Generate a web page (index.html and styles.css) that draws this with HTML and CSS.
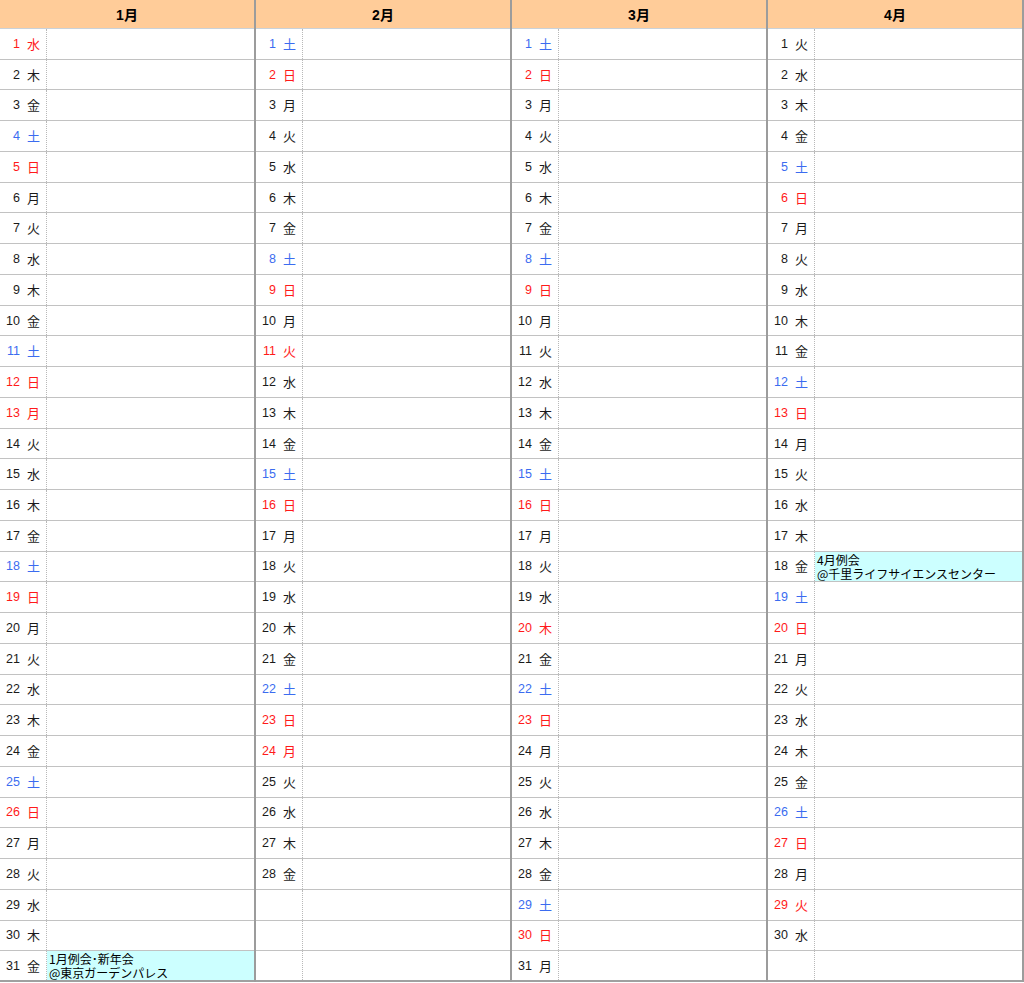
FILE: index.html
```html
<!DOCTYPE html>
<html lang="ja">
<head>
<meta charset="utf-8">
<title>カレンダー</title>
<link rel="stylesheet" href="styles.css">
</head>
<body>
<div class="cal">
<section class="mon">
<div class="hd">1月</div>
<div class="row"><div class="d r"><span class="n">1</span><span class="w">水</span></div><div class="m"></div></div>
<div class="row"><div class="d"><span class="n">2</span><span class="w">木</span></div><div class="m"></div></div>
<div class="row"><div class="d"><span class="n">3</span><span class="w">金</span></div><div class="m"></div></div>
<div class="row"><div class="d b"><span class="n">4</span><span class="w">土</span></div><div class="m"></div></div>
<div class="row"><div class="d r"><span class="n">5</span><span class="w">日</span></div><div class="m"></div></div>
<div class="row"><div class="d"><span class="n">6</span><span class="w">月</span></div><div class="m"></div></div>
<div class="row"><div class="d"><span class="n">7</span><span class="w">火</span></div><div class="m"></div></div>
<div class="row"><div class="d"><span class="n">8</span><span class="w">水</span></div><div class="m"></div></div>
<div class="row"><div class="d"><span class="n">9</span><span class="w">木</span></div><div class="m"></div></div>
<div class="row"><div class="d"><span class="n">10</span><span class="w">金</span></div><div class="m"></div></div>
<div class="row"><div class="d b"><span class="n">11</span><span class="w">土</span></div><div class="m"></div></div>
<div class="row"><div class="d r"><span class="n">12</span><span class="w">日</span></div><div class="m"></div></div>
<div class="row"><div class="d r"><span class="n">13</span><span class="w">月</span></div><div class="m"></div></div>
<div class="row"><div class="d"><span class="n">14</span><span class="w">火</span></div><div class="m"></div></div>
<div class="row"><div class="d"><span class="n">15</span><span class="w">水</span></div><div class="m"></div></div>
<div class="row"><div class="d"><span class="n">16</span><span class="w">木</span></div><div class="m"></div></div>
<div class="row"><div class="d"><span class="n">17</span><span class="w">金</span></div><div class="m"></div></div>
<div class="row"><div class="d b"><span class="n">18</span><span class="w">土</span></div><div class="m"></div></div>
<div class="row"><div class="d r"><span class="n">19</span><span class="w">日</span></div><div class="m"></div></div>
<div class="row"><div class="d"><span class="n">20</span><span class="w">月</span></div><div class="m"></div></div>
<div class="row"><div class="d"><span class="n">21</span><span class="w">火</span></div><div class="m"></div></div>
<div class="row"><div class="d"><span class="n">22</span><span class="w">水</span></div><div class="m"></div></div>
<div class="row"><div class="d"><span class="n">23</span><span class="w">木</span></div><div class="m"></div></div>
<div class="row"><div class="d"><span class="n">24</span><span class="w">金</span></div><div class="m"></div></div>
<div class="row"><div class="d b"><span class="n">25</span><span class="w">土</span></div><div class="m"></div></div>
<div class="row"><div class="d r"><span class="n">26</span><span class="w">日</span></div><div class="m"></div></div>
<div class="row"><div class="d"><span class="n">27</span><span class="w">月</span></div><div class="m"></div></div>
<div class="row"><div class="d"><span class="n">28</span><span class="w">火</span></div><div class="m"></div></div>
<div class="row"><div class="d"><span class="n">29</span><span class="w">水</span></div><div class="m"></div></div>
<div class="row"><div class="d"><span class="n">30</span><span class="w">木</span></div><div class="m"></div></div>
<div class="row"><div class="d"><span class="n">31</span><span class="w">金</span></div><div class="m ev">1月例会･新年会<br>@東京ガーデンパレス</div></div>
</section>
<section class="mon">
<div class="hd">2月</div>
<div class="row"><div class="d b"><span class="n">1</span><span class="w">土</span></div><div class="m"></div></div>
<div class="row"><div class="d r"><span class="n">2</span><span class="w">日</span></div><div class="m"></div></div>
<div class="row"><div class="d"><span class="n">3</span><span class="w">月</span></div><div class="m"></div></div>
<div class="row"><div class="d"><span class="n">4</span><span class="w">火</span></div><div class="m"></div></div>
<div class="row"><div class="d"><span class="n">5</span><span class="w">水</span></div><div class="m"></div></div>
<div class="row"><div class="d"><span class="n">6</span><span class="w">木</span></div><div class="m"></div></div>
<div class="row"><div class="d"><span class="n">7</span><span class="w">金</span></div><div class="m"></div></div>
<div class="row"><div class="d b"><span class="n">8</span><span class="w">土</span></div><div class="m"></div></div>
<div class="row"><div class="d r"><span class="n">9</span><span class="w">日</span></div><div class="m"></div></div>
<div class="row"><div class="d"><span class="n">10</span><span class="w">月</span></div><div class="m"></div></div>
<div class="row"><div class="d r"><span class="n">11</span><span class="w">火</span></div><div class="m"></div></div>
<div class="row"><div class="d"><span class="n">12</span><span class="w">水</span></div><div class="m"></div></div>
<div class="row"><div class="d"><span class="n">13</span><span class="w">木</span></div><div class="m"></div></div>
<div class="row"><div class="d"><span class="n">14</span><span class="w">金</span></div><div class="m"></div></div>
<div class="row"><div class="d b"><span class="n">15</span><span class="w">土</span></div><div class="m"></div></div>
<div class="row"><div class="d r"><span class="n">16</span><span class="w">日</span></div><div class="m"></div></div>
<div class="row"><div class="d"><span class="n">17</span><span class="w">月</span></div><div class="m"></div></div>
<div class="row"><div class="d"><span class="n">18</span><span class="w">火</span></div><div class="m"></div></div>
<div class="row"><div class="d"><span class="n">19</span><span class="w">水</span></div><div class="m"></div></div>
<div class="row"><div class="d"><span class="n">20</span><span class="w">木</span></div><div class="m"></div></div>
<div class="row"><div class="d"><span class="n">21</span><span class="w">金</span></div><div class="m"></div></div>
<div class="row"><div class="d b"><span class="n">22</span><span class="w">土</span></div><div class="m"></div></div>
<div class="row"><div class="d r"><span class="n">23</span><span class="w">日</span></div><div class="m"></div></div>
<div class="row"><div class="d r"><span class="n">24</span><span class="w">月</span></div><div class="m"></div></div>
<div class="row"><div class="d"><span class="n">25</span><span class="w">火</span></div><div class="m"></div></div>
<div class="row"><div class="d"><span class="n">26</span><span class="w">水</span></div><div class="m"></div></div>
<div class="row"><div class="d"><span class="n">27</span><span class="w">木</span></div><div class="m"></div></div>
<div class="row"><div class="d"><span class="n">28</span><span class="w">金</span></div><div class="m"></div></div>
<div class="row"><div class="d"></div><div class="m"></div></div>
<div class="row"><div class="d"></div><div class="m"></div></div>
<div class="row"><div class="d"></div><div class="m"></div></div>
</section>
<section class="mon">
<div class="hd">3月</div>
<div class="row"><div class="d b"><span class="n">1</span><span class="w">土</span></div><div class="m"></div></div>
<div class="row"><div class="d r"><span class="n">2</span><span class="w">日</span></div><div class="m"></div></div>
<div class="row"><div class="d"><span class="n">3</span><span class="w">月</span></div><div class="m"></div></div>
<div class="row"><div class="d"><span class="n">4</span><span class="w">火</span></div><div class="m"></div></div>
<div class="row"><div class="d"><span class="n">5</span><span class="w">水</span></div><div class="m"></div></div>
<div class="row"><div class="d"><span class="n">6</span><span class="w">木</span></div><div class="m"></div></div>
<div class="row"><div class="d"><span class="n">7</span><span class="w">金</span></div><div class="m"></div></div>
<div class="row"><div class="d b"><span class="n">8</span><span class="w">土</span></div><div class="m"></div></div>
<div class="row"><div class="d r"><span class="n">9</span><span class="w">日</span></div><div class="m"></div></div>
<div class="row"><div class="d"><span class="n">10</span><span class="w">月</span></div><div class="m"></div></div>
<div class="row"><div class="d"><span class="n">11</span><span class="w">火</span></div><div class="m"></div></div>
<div class="row"><div class="d"><span class="n">12</span><span class="w">水</span></div><div class="m"></div></div>
<div class="row"><div class="d"><span class="n">13</span><span class="w">木</span></div><div class="m"></div></div>
<div class="row"><div class="d"><span class="n">14</span><span class="w">金</span></div><div class="m"></div></div>
<div class="row"><div class="d b"><span class="n">15</span><span class="w">土</span></div><div class="m"></div></div>
<div class="row"><div class="d r"><span class="n">16</span><span class="w">日</span></div><div class="m"></div></div>
<div class="row"><div class="d"><span class="n">17</span><span class="w">月</span></div><div class="m"></div></div>
<div class="row"><div class="d"><span class="n">18</span><span class="w">火</span></div><div class="m"></div></div>
<div class="row"><div class="d"><span class="n">19</span><span class="w">水</span></div><div class="m"></div></div>
<div class="row"><div class="d r"><span class="n">20</span><span class="w">木</span></div><div class="m"></div></div>
<div class="row"><div class="d"><span class="n">21</span><span class="w">金</span></div><div class="m"></div></div>
<div class="row"><div class="d b"><span class="n">22</span><span class="w">土</span></div><div class="m"></div></div>
<div class="row"><div class="d r"><span class="n">23</span><span class="w">日</span></div><div class="m"></div></div>
<div class="row"><div class="d"><span class="n">24</span><span class="w">月</span></div><div class="m"></div></div>
<div class="row"><div class="d"><span class="n">25</span><span class="w">火</span></div><div class="m"></div></div>
<div class="row"><div class="d"><span class="n">26</span><span class="w">水</span></div><div class="m"></div></div>
<div class="row"><div class="d"><span class="n">27</span><span class="w">木</span></div><div class="m"></div></div>
<div class="row"><div class="d"><span class="n">28</span><span class="w">金</span></div><div class="m"></div></div>
<div class="row"><div class="d b"><span class="n">29</span><span class="w">土</span></div><div class="m"></div></div>
<div class="row"><div class="d r"><span class="n">30</span><span class="w">日</span></div><div class="m"></div></div>
<div class="row"><div class="d"><span class="n">31</span><span class="w">月</span></div><div class="m"></div></div>
</section>
<section class="mon">
<div class="hd">4月</div>
<div class="row"><div class="d"><span class="n">1</span><span class="w">火</span></div><div class="m"></div></div>
<div class="row"><div class="d"><span class="n">2</span><span class="w">水</span></div><div class="m"></div></div>
<div class="row"><div class="d"><span class="n">3</span><span class="w">木</span></div><div class="m"></div></div>
<div class="row"><div class="d"><span class="n">4</span><span class="w">金</span></div><div class="m"></div></div>
<div class="row"><div class="d b"><span class="n">5</span><span class="w">土</span></div><div class="m"></div></div>
<div class="row"><div class="d r"><span class="n">6</span><span class="w">日</span></div><div class="m"></div></div>
<div class="row"><div class="d"><span class="n">7</span><span class="w">月</span></div><div class="m"></div></div>
<div class="row"><div class="d"><span class="n">8</span><span class="w">火</span></div><div class="m"></div></div>
<div class="row"><div class="d"><span class="n">9</span><span class="w">水</span></div><div class="m"></div></div>
<div class="row"><div class="d"><span class="n">10</span><span class="w">木</span></div><div class="m"></div></div>
<div class="row"><div class="d"><span class="n">11</span><span class="w">金</span></div><div class="m"></div></div>
<div class="row"><div class="d b"><span class="n">12</span><span class="w">土</span></div><div class="m"></div></div>
<div class="row"><div class="d r"><span class="n">13</span><span class="w">日</span></div><div class="m"></div></div>
<div class="row"><div class="d"><span class="n">14</span><span class="w">月</span></div><div class="m"></div></div>
<div class="row"><div class="d"><span class="n">15</span><span class="w">火</span></div><div class="m"></div></div>
<div class="row"><div class="d"><span class="n">16</span><span class="w">水</span></div><div class="m"></div></div>
<div class="row"><div class="d"><span class="n">17</span><span class="w">木</span></div><div class="m"></div></div>
<div class="row"><div class="d"><span class="n">18</span><span class="w">金</span></div><div class="m ev">4月例会<br>@千里ライフサイエンスセンター</div></div>
<div class="row"><div class="d b"><span class="n">19</span><span class="w">土</span></div><div class="m"></div></div>
<div class="row"><div class="d r"><span class="n">20</span><span class="w">日</span></div><div class="m"></div></div>
<div class="row"><div class="d"><span class="n">21</span><span class="w">月</span></div><div class="m"></div></div>
<div class="row"><div class="d"><span class="n">22</span><span class="w">火</span></div><div class="m"></div></div>
<div class="row"><div class="d"><span class="n">23</span><span class="w">水</span></div><div class="m"></div></div>
<div class="row"><div class="d"><span class="n">24</span><span class="w">木</span></div><div class="m"></div></div>
<div class="row"><div class="d"><span class="n">25</span><span class="w">金</span></div><div class="m"></div></div>
<div class="row"><div class="d b"><span class="n">26</span><span class="w">土</span></div><div class="m"></div></div>
<div class="row"><div class="d r"><span class="n">27</span><span class="w">日</span></div><div class="m"></div></div>
<div class="row"><div class="d"><span class="n">28</span><span class="w">月</span></div><div class="m"></div></div>
<div class="row"><div class="d r"><span class="n">29</span><span class="w">火</span></div><div class="m"></div></div>
<div class="row"><div class="d"><span class="n">30</span><span class="w">水</span></div><div class="m"></div></div>
<div class="row"><div class="d"></div><div class="m"></div></div>
</section>
</div>
</body>
</html>
```

FILE: styles.css
```css
html, body {
  margin: 0;
  padding: 0;
  background: #ffffff;
}

body {
  font-family: "Liberation Sans", "Noto Sans CJK JP", sans-serif;
  color: #111111;
}

.cal {
  display: grid;
  grid-template-columns: repeat(4, 256px);
  grid-template-rows: 982px;
  width: 1024px;
}

.mon {
  display: grid;
  grid-template-rows: 29px repeat(31, minmax(0, 1fr));
  height: 982px;
  border-right: 2px solid #9c9c9c;
  min-width: 0;
  overflow: hidden;
}

.mon:last-child {
  width: 254px;
}

.hd {
  background: #ffcc99;
  border-bottom: 1px solid #c9d2da;
  box-sizing: border-box;
  display: flex;
  align-items: center;
  justify-content: center;
  font-weight: bold;
  font-size: 14px;
  color: #000000;
}

.row {
  display: flex;
  border-bottom: 1px solid #c2c2c2;
  box-sizing: border-box;
  min-height: 0;
  overflow: hidden;
}

.row:last-child {
  border-bottom: 2px solid #a0a0a0;
}

.d {
  width: 46px;
  flex: none;
  display: flex;
  align-items: center;
  border-right: 1px dotted #b8b8b8;
  font-size: 12.5px;
  color: #1a1a1a;
}

.d.r {
  color: #ff1a1a;
}

.d.b {
  color: #3b6cf0;
}

.n {
  width: 20px;
  text-align: right;
}

.w {
  margin-left: 7px;
  font-family: "Noto Sans CJK JP", sans-serif;
  font-size: 13px;
  line-height: 16px;
}

.m {
  flex: 1;
  min-width: 0;
}

.ev {
  background: #ccffff;
  font-family: "Noto Sans CJK JP", sans-serif;
  font-size: 12px;
  line-height: 14px;
  padding: 1px 0 0 2px;
  color: #000000;
  white-space: nowrap;
  overflow: hidden;
}
```
